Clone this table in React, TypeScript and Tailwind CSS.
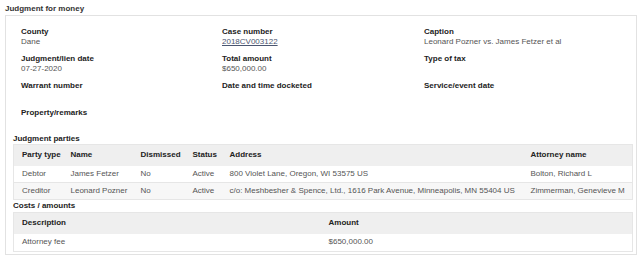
import React from "react";

type Field = { label: string; value?: string; link?: boolean };

const fields: Field[] = [
  { label: "County", value: "Dane" },
  { label: "Case number", value: "2018CV003122", link: true },
  { label: "Caption", value: "Leonard Pozner vs. James Fetzer et al" },
  { label: "Judgment/lien date", value: "07-27-2020" },
  { label: "Total amount", value: "$650,000.00" },
  { label: "Type of tax" },
  { label: "Warrant number" },
  { label: "Date and time docketed" },
  { label: "Service/event date" },
  { label: "Property/remarks" },
];

const parties = [
  {
    type: "Debtor",
    name: "James Fetzer",
    dismissed: "No",
    status: "Active",
    address: "800 Violet Lane, Oregon, WI 53575 US",
    attorney: "Bolton, Richard L",
  },
  {
    type: "Creditor",
    name: "Leonard Pozner",
    dismissed: "No",
    status: "Active",
    address: "c/o: Meshbesher & Spence, Ltd., 1616 Park Avenue, Minneapolis, MN 55404 US",
    attorney: "Zimmerman, Genevieve M",
  },
];

export default function App() {
  return (
    <div className="w-[640px] h-[260px] bg-white text-[8px] leading-[10px] text-[#222] font-['Liberation_Sans',Arial,sans-serif]">
      <div className="px-[5px] pt-[2px] h-[15px] flex items-center font-bold text-[#333]">
        Judgment for money
      </div>
      <div className="mx-[5px] mr-[3px] h-[240px] border border-[#e2e2e2] px-[7px]">
        <div className="grid grid-cols-[201px_202px_1fr] pl-[8px] pt-[11px] gap-y-[7px]">
          {fields.map((f) => (
            <div key={f.label} className="flex flex-col">
              <div className="h-[10px] font-bold">{f.label}</div>
              <div className="h-[10px] text-[#555]">
                {f.link ? (
                  <span className="underline text-[#4a5570]">{f.value}</span>
                ) : (
                  f.value
                )}
              </div>
            </div>
          ))}
        </div>

        <div className="mt-[5px] h-[11px] flex items-center font-bold">Judgment parties</div>
        <table className="w-[620px] border-collapse table-fixed border border-[#e6e6e6]">
          <colgroup>
            <col className="w-[57px]" />
            <col className="w-[70px]" />
            <col className="w-[52px]" />
            <col className="w-[37px]" />
            <col className="w-[301px]" />
            <col />
          </colgroup>
          <thead>
            <tr className="bg-[#efefef] h-[21px] text-left font-bold">
              <th className="pl-[8px]">Party type</th>
              <th>Name</th>
              <th>Dismissed</th>
              <th>Status</th>
              <th>Address</th>
              <th>Attorney name</th>
            </tr>
          </thead>
          <tbody className="text-[#555]">
            {parties.map((p, i) => (
              <tr
                key={p.type}
                className={i % 2 === 1 ? "h-[17px] bg-[#f7f7f7] border-t border-[#e6e6e6]" : "h-[17px] bg-white"}
              >
                <td className="pl-[8px]">{p.type}</td>
                <td>{p.name}</td>
                <td>{p.dismissed}</td>
                <td>{p.status}</td>
                <td className="whitespace-nowrap">{p.address}</td>
                <td className="whitespace-nowrap">{p.attorney}</td>
              </tr>
            ))}
          </tbody>
        </table>

        <div className="h-[12px] flex items-center font-bold">Costs / amounts</div>
        <table className="w-[620px] border-collapse table-fixed border border-[#e6e6e6]">
          <colgroup>
            <col className="w-[315px]" />
            <col />
          </colgroup>
          <thead>
            <tr className="bg-[#efefef] h-[21px] text-left font-bold">
              <th className="pl-[8px]">Description</th>
              <th>Amount</th>
            </tr>
          </thead>
          <tbody className="text-[#555]">
            <tr className="h-[18px] bg-white">
              <td className="pl-[8px]">Attorney fee</td>
              <td>$650,000.00</td>
            </tr>
          </tbody>
        </table>
      </div>
    </div>
  );
}
